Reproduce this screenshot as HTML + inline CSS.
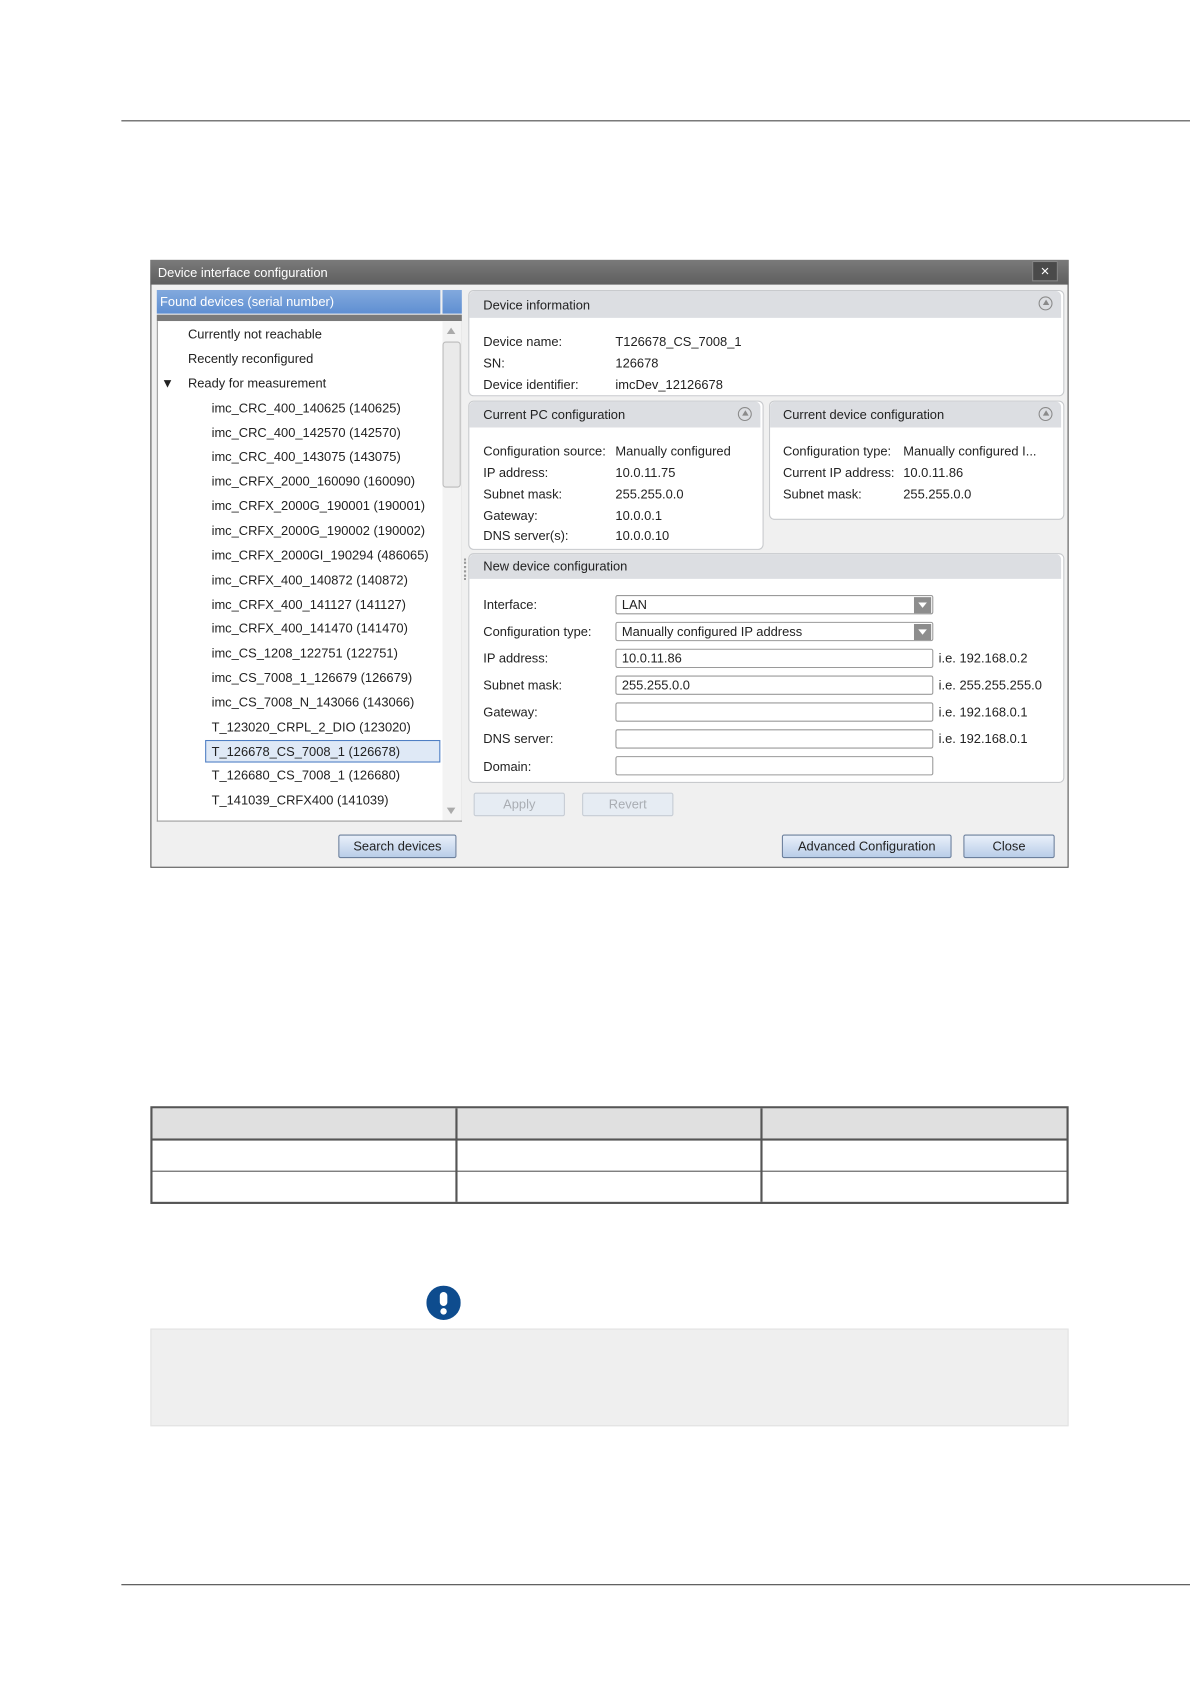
<!DOCTYPE html>
<html><head><meta charset="utf-8"><style>
html,body{margin:0;padding:0;background:#fff;width:1190px;height:1684px;overflow:hidden}
#w{position:absolute;left:0;top:0;width:1108px;height:1568px;transform:scale(1.07401);transform-origin:0 0;font-family:"Liberation Sans",sans-serif;font-size:12px;color:#222}
.a{position:absolute}
.t{position:absolute;white-space:nowrap;line-height:14px}
.ph{position:absolute;background:#dcdee2;border-radius:5px 5px 0 0}
.pn{position:absolute;background:#fff;border:1px solid #c8cacd;border-radius:5px}
.ci{position:absolute;width:13px;height:13px;border:1.5px solid #8a8a8a;border-radius:50%;box-sizing:border-box}
.ci:after{content:"";position:absolute;left:2.5px;top:2px;border-left:3px solid transparent;border-right:3px solid transparent;border-bottom:5px solid #8a8a8a}
.in{position:absolute;background:#fff;border:1px solid #9a9a9a;border-radius:2px;height:18px;box-sizing:border-box}
.dd{position:absolute;width:16px;height:15px;background:#8d8d8d;top:1px;right:1px}
.dd:after{content:"";position:absolute;left:4px;top:5px;border-left:4px solid transparent;border-right:4px solid transparent;border-top:5px solid #fff}
.bt{position:absolute;border:1px solid #6b7f9c;border-radius:2px;background:linear-gradient(#e9f0fa,#b9cde8);text-align:center;line-height:20px;box-sizing:border-box;height:22px}
.bd{position:absolute;border:1px solid #c6ccd4;border-radius:2px;background:#e6ecf3;color:#a9adb3;text-align:center;line-height:20px;box-sizing:border-box;height:22px}
</style></head><body><div id="w">
<div class="a" style="left:113px;top:112px;width:995px;height:1px;background:#444"></div>
<div class="a" style="left:113px;top:1475px;width:995px;height:1px;background:#444"></div>

<!-- dialog -->
<div class="a" style="left:140px;top:242px;width:855px;height:566px;background:#f0f0f0;border:1px solid #555;box-sizing:border-box"></div>
<div class="a" style="left:140px;top:242px;width:855px;height:23px;background:linear-gradient(#7a7a7a,#5e5e5e)"></div>
<div class="t" style="left:147px;top:247px;color:#fff">Device interface configuration</div>
<div class="a" style="left:961px;top:243px;width:24px;height:19px;background:#4a4a4a;border:1px solid #888;box-sizing:border-box;color:#fff;text-align:center;line-height:16px;font-size:14px">×</div>

<!-- left list -->
<div class="a" style="left:146px;top:270px;width:264px;height:22px;background:linear-gradient(#82a9dd,#5f8fd2)"></div>
<div class="t" style="left:149px;top:274px;color:#fff">Found devices (serial number)</div>
<div class="a" style="left:412px;top:270px;width:18px;height:22px;background:linear-gradient(#82a9dd,#5f8fd2)"></div>
<div class="a" style="left:146px;top:293px;width:284px;height:6px;background:#7a7a7a"></div>
<div class="a" style="left:146px;top:299px;width:284px;height:466px;background:#fff;border:1px solid #999;border-top:none;box-sizing:border-box"></div>
<div class="a" style="left:412px;top:299px;width:18px;height:465px;background:#f3f3f3"></div>
<div class="a" style="left:416px;top:305px;border-left:4px solid transparent;border-right:4px solid transparent;border-bottom:6px solid #aaa"></div>
<div class="a" style="left:412px;top:318px;width:17px;height:136px;background:#eaeaea;border:1px solid #bbb;border-radius:3px;box-sizing:border-box"></div>
<div class="a" style="left:416px;top:752px;border-left:4px solid transparent;border-right:4px solid transparent;border-top:6px solid #aaa"></div>
<div class="a" style="left:191px;top:689px;width:219px;height:21px;background:#dfe9f6;border:1.5px solid #4f7fc4;box-sizing:border-box"></div>
<div class="t" style="left:175px;top:304px">Currently not reachable</div>
<div class="t" style="left:175px;top:327px">Recently reconfigured</div>
<div class="t" style="left:150px;top:350px">▼</div>
<div class="t" style="left:175px;top:350px">Ready for measurement</div>
<div class="t" style="left:197px;top:373px">imc_CRC_400_140625 (140625)</div>
<div class="t" style="left:197px;top:396px">imc_CRC_400_142570 (142570)</div>
<div class="t" style="left:197px;top:418px">imc_CRC_400_143075 (143075)</div>
<div class="t" style="left:197px;top:441px">imc_CRFX_2000_160090 (160090)</div>
<div class="t" style="left:197px;top:464px">imc_CRFX_2000G_190001 (190001)</div>
<div class="t" style="left:197px;top:487px">imc_CRFX_2000G_190002 (190002)</div>
<div class="t" style="left:197px;top:510px">imc_CRFX_2000GI_190294 (486065)</div>
<div class="t" style="left:197px;top:533px">imc_CRFX_400_140872 (140872)</div>
<div class="t" style="left:197px;top:556px">imc_CRFX_400_141127 (141127)</div>
<div class="t" style="left:197px;top:578px">imc_CRFX_400_141470 (141470)</div>
<div class="t" style="left:197px;top:601px">imc_CS_1208_122751 (122751)</div>
<div class="t" style="left:197px;top:624px">imc_CS_7008_1_126679 (126679)</div>
<div class="t" style="left:197px;top:647px">imc_CS_7008_N_143066 (143066)</div>
<div class="t" style="left:197px;top:670px">T_123020_CRPL_2_DIO (123020)</div>
<div class="t" style="left:197px;top:693px">T_126678_CS_7008_1 (126678)</div>
<div class="t" style="left:197px;top:715px">T_126680_CS_7008_1 (126680)</div>
<div class="t" style="left:197px;top:738px">T_141039_CRFX400 (141039)</div>

<!-- Device information -->
<div class="pn" style="left:436px;top:270px;width:553px;height:97px"></div>
<div class="ph" style="left:437px;top:271px;width:551px;height:25px"></div>
<div class="t" style="left:450px;top:277px">Device information</div>
<div class="ci" style="left:967px;top:276px"></div>
<div class="t" style="left:450px;top:311px">Device name:</div><div class="t" style="left:573px;top:311px">T126678_CS_7008_1</div>
<div class="t" style="left:450px;top:331px">SN:</div><div class="t" style="left:573px;top:331px">126678</div>
<div class="t" style="left:450px;top:351px">Device identifier:</div><div class="t" style="left:573px;top:351px">imcDev_12126678</div>

<!-- Current PC -->
<div class="pn" style="left:436px;top:373px;width:273px;height:137px"></div>
<div class="ph" style="left:437px;top:374px;width:271px;height:24px"></div>
<div class="t" style="left:450px;top:379px">Current PC configuration</div>
<div class="ci" style="left:687px;top:379px"></div>
<div class="t" style="left:450px;top:413px">Configuration source:</div><div class="t" style="left:573px;top:413px">Manually configured</div>
<div class="t" style="left:450px;top:433px">IP address:</div><div class="t" style="left:573px;top:433px">10.0.11.75</div>
<div class="t" style="left:450px;top:453px">Subnet mask:</div><div class="t" style="left:573px;top:453px">255.255.0.0</div>
<div class="t" style="left:450px;top:473px">Gateway:</div><div class="t" style="left:573px;top:473px">10.0.0.1</div>
<div class="t" style="left:450px;top:492px">DNS server(s):</div><div class="t" style="left:573px;top:492px">10.0.0.10</div>

<!-- Current device -->
<div class="pn" style="left:716px;top:373px;width:273px;height:109px"></div>
<div class="ph" style="left:717px;top:374px;width:271px;height:24px"></div>
<div class="t" style="left:729px;top:379px">Current device configuration</div>
<div class="ci" style="left:967px;top:379px"></div>
<div class="t" style="left:729px;top:413px">Configuration type:</div><div class="t" style="left:841px;top:413px">Manually configured I...</div>
<div class="t" style="left:729px;top:433px">Current IP address:</div><div class="t" style="left:841px;top:433px">10.0.11.86</div>
<div class="t" style="left:729px;top:453px">Subnet mask:</div><div class="t" style="left:841px;top:453px">255.255.0.0</div>

<!-- New device config -->
<div class="a" style="left:432px;top:520px;width:2px;height:20px;border-left:2px dotted #999"></div>
<div class="pn" style="left:436px;top:515px;width:553px;height:212px"></div>
<div class="ph" style="left:437px;top:516px;width:551px;height:23px"></div>
<div class="t" style="left:450px;top:520px">New device configuration</div>
<div class="t" style="left:450px;top:556px">Interface:</div>
<div class="t" style="left:450px;top:581px">Configuration type:</div>
<div class="t" style="left:450px;top:606px">IP address:</div>
<div class="t" style="left:450px;top:631px">Subnet mask:</div>
<div class="t" style="left:450px;top:656px">Gateway:</div>
<div class="t" style="left:450px;top:681px">DNS server:</div>
<div class="t" style="left:450px;top:707px">Domain:</div>
<div class="in" style="left:573px;top:554px;width:296px"><div class="dd"></div></div>
<div class="t" style="left:579px;top:556px">LAN</div>
<div class="in" style="left:573px;top:579px;width:296px"><div class="dd"></div></div>
<div class="t" style="left:579px;top:581px">Manually configured IP address</div>
<div class="in" style="left:573px;top:604px;width:296px"></div>
<div class="t" style="left:579px;top:606px">10.0.11.86</div>
<div class="in" style="left:573px;top:629px;width:296px"></div>
<div class="t" style="left:579px;top:631px">255.255.0.0</div>
<div class="in" style="left:573px;top:654px;width:296px"></div>
<div class="in" style="left:573px;top:679px;width:296px"></div>
<div class="in" style="left:573px;top:704px;width:296px"></div>
<div class="t" style="left:874px;top:606px">i.e. 192.168.0.2</div>
<div class="t" style="left:874px;top:631px">i.e. 255.255.255.0</div>
<div class="t" style="left:874px;top:656px">i.e. 192.168.0.1</div>
<div class="t" style="left:874px;top:681px">i.e. 192.168.0.1</div>

<div class="bd" style="left:441px;top:738px;width:85px">Apply</div>
<div class="bd" style="left:542px;top:738px;width:85px">Revert</div>
<div class="bt" style="left:315px;top:777px;width:110px">Search devices</div>
<div class="bt" style="left:728px;top:777px;width:158px">Advanced Configuration</div>
<div class="bt" style="left:897px;top:777px;width:85px">Close</div>

<!-- table -->
<div class="a" style="left:140px;top:1030px;width:855px;height:91px;border:2px solid #555;box-sizing:border-box"></div>
<div class="a" style="left:142px;top:1032px;width:851px;height:28px;background:#e0e0e0"></div>
<div class="a" style="left:142px;top:1060px;width:851px;height:2px;background:#555"></div>
<div class="a" style="left:142px;top:1090px;width:851px;height:1px;background:#555"></div>
<div class="a" style="left:424px;top:1032px;width:2px;height:87px;background:#555"></div>
<div class="a" style="left:708px;top:1032px;width:2px;height:87px;background:#555"></div>

<!-- icon -->
<svg class="a" style="left:397px;top:1197px" width="32" height="32" viewBox="0 0 32 32"><circle cx="16" cy="16" r="16" fill="#0e4c8e"/><rect x="12.5" y="6" width="7" height="13" rx="3.5" fill="#fff"/><circle cx="16" cy="24" r="3" fill="#fff"/></svg>

<div class="a" style="left:140px;top:1237px;width:855px;height:91px;background:#efefef;border:1px solid #e2e2e2;box-sizing:border-box"></div>
</div></body></html>
